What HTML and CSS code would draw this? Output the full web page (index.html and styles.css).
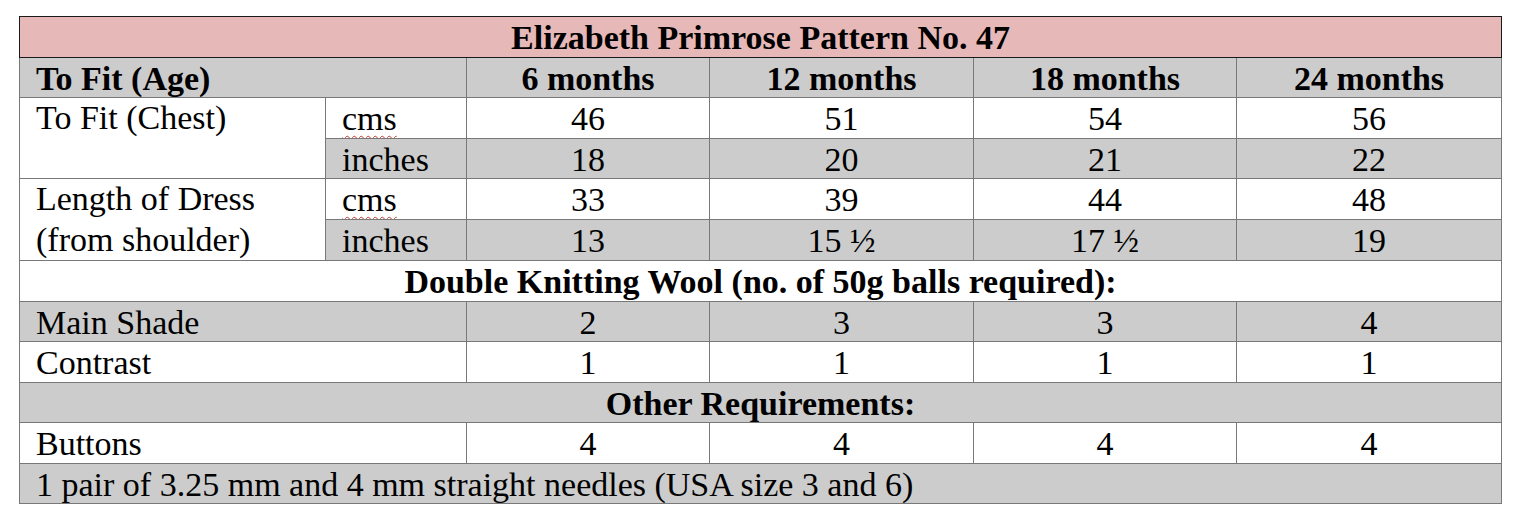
FILE: index.html
```html
<!DOCTYPE html>
<html>
<head>
<meta charset="utf-8">
<link rel="stylesheet" href="styles.css">
</head>
<body>
<div class="page">
<table class="pattern">
  <colgroup>
    <col class="c-label">
    <col class="c-unit">
    <col class="c-6">
    <col class="c-12">
    <col class="c-18">
    <col class="c-24">
  </colgroup>
  <tr class="title">
    <td colspan="6" class="bold center">Elizabeth Primrose Pattern No. 47</td>
  </tr>
  <tr class="gray">
    <td colspan="2" class="bold">To Fit (Age)</td>
    <td class="bold center">6 months</td>
    <td class="bold center">12 months</td>
    <td class="bold center">18 months</td>
    <td class="bold center">24 months</td>
  </tr>
  <tr>
    <td rowspan="2" class="label top">To Fit (Chest)</td>
    <td><span class="spell">cms</span></td>
    <td class="center">46</td>
    <td class="center">51</td>
    <td class="center">54</td>
    <td class="center">56</td>
  </tr>
  <tr class="gray">
    <td>inches</td>
    <td class="center">18</td>
    <td class="center">20</td>
    <td class="center">21</td>
    <td class="center">22</td>
  </tr>
  <tr>
    <td rowspan="2" class="label top">Length of Dress<br>(from shoulder)</td>
    <td><span class="spell">cms</span></td>
    <td class="center">33</td>
    <td class="center">39</td>
    <td class="center">44</td>
    <td class="center">48</td>
  </tr>
  <tr class="gray">
    <td>inches</td>
    <td class="center">13</td>
    <td class="center">15 ½</td>
    <td class="center">17 ½</td>
    <td class="center">19</td>
  </tr>
  <tr>
    <td colspan="6" class="bold center">Double Knitting Wool (no. of 50g balls required):</td>
  </tr>
  <tr class="gray">
    <td colspan="2">Main Shade</td>
    <td class="center">2</td>
    <td class="center">3</td>
    <td class="center">3</td>
    <td class="center">4</td>
  </tr>
  <tr>
    <td colspan="2">Contrast</td>
    <td class="center">1</td>
    <td class="center">1</td>
    <td class="center">1</td>
    <td class="center">1</td>
  </tr>
  <tr class="gray">
    <td colspan="6" class="bold center">Other Requirements:</td>
  </tr>
  <tr>
    <td colspan="2">Buttons</td>
    <td class="center">4</td>
    <td class="center">4</td>
    <td class="center">4</td>
    <td class="center">4</td>
  </tr>
  <tr class="gray">
    <td colspan="6">1 pair of 3.25 mm and 4 mm straight needles (USA size 3 and 6)</td>
  </tr>
</table>
</div>
</body>
</html>
```

FILE: styles.css
```css
html, body {
  margin: 0;
  padding: 0;
  background: #ffffff;
  font-family: "Liberation Serif", serif;
}

.page {
  padding: 16px 0 0 19px;
}

.pattern {
  border-collapse: collapse;
  table-layout: fixed;
  width: 1482px;
  font-family: "Liberation Serif", serif;
  font-size: 34px;
  color: #000;
}

.c-label { width: 306px; }
.c-unit { width: 141px; }
.c-6 { width: 243px; }
.c-12 { width: 264px; }
.c-18 { width: 263px; }
.c-24 { width: 265px; }

.pattern td {
  font-family: "Liberation Serif", serif;
  border: 1px solid #787878;
  height: 37.5px;
  padding: 2px 0 0 16px;
  line-height: 37.5px;
  vertical-align: middle;
  white-space: nowrap;
  overflow: hidden;
}

.pattern tr.title td {
  background: #e6b8b7;
  border: 1px solid #1a1a1a;
}

.pattern tr.gray td {
  background: #cccccc;
}

.pattern td.label {
  background: #ffffff;
  line-height: 40.5px;
  padding-top: 0;
}

.pattern td.top {
  vertical-align: top;
}

.pattern td.center {
  text-align: center;
  padding-left: 0;
}

.bold {
  font-weight: bold;
}

.spell {
  text-decoration: underline wavy #c0392b;
  text-decoration-thickness: 1px;
  text-underline-offset: 5px;
}
```
